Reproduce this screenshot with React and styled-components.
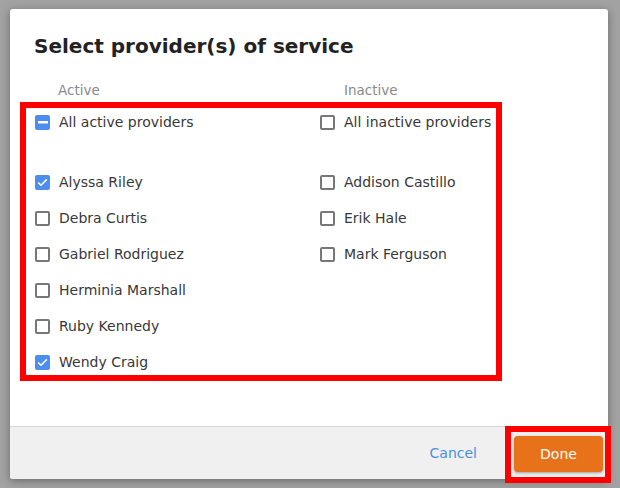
import React, { useState } from "react";
import styled, { createGlobalStyle } from "styled-components";

const Global = createGlobalStyle`
  html, body { margin: 0; padding: 0; background: #a2a2a2; }
  body { font-family: "DejaVu Sans", Verdana, sans-serif; width: 620px; height: 488px; overflow: hidden; }
  #root { padding: 9px 0 0 10px; }
`;

const Dialog = styled.div`
  width: 598px;
  height: 470px;
  background: #fff;
  border-radius: 3px;
  box-shadow: 0 2px 8px rgba(0, 0, 0, 0.35);
  display: flex;
  flex-direction: column;
  box-sizing: border-box;
`;

const Body = styled.div`
  flex: 1;
  padding: 25px 0 0 0;
`;

const Title = styled.h1`
  margin: 0 0 0 24px;
  font-size: 20px;
  line-height: 24px;
  font-weight: bold;
  color: #222;
`;

const Heads = styled.div`
  display: grid;
  grid-template-columns: 286px auto;
  margin: 23px 0 0 48px;
  font-size: 13.5px;
  line-height: 18px;
  color: #8a8a8a;
`;

const Highlight = styled.div`
  margin: 3px 0 0 10px;
  width: 482px;
  height: 279px;
  box-sizing: border-box;
  border: 6px solid #ff0000;
  padding: 4px 0 3px 9px;
  display: grid;
  grid-template-columns: 285px auto;
`;

const Column = styled.div`
  display: flex;
  flex-direction: column;
  gap: 16px;
`;

const Row = styled.label`
  display: flex;
  align-items: center;
  gap: 9px;
  height: 20px;
  font-size: 14px;
  color: #383838;
  margin-bottom: ${(p) => (p.$lead ? "24px" : "0")};
  cursor: pointer;
`;

const Box = styled.span`
  width: 15px;
  height: 15px;
  box-sizing: border-box;
  border-radius: 2px;
  flex: none;
  display: flex;
  align-items: center;
  justify-content: center;
  background: ${(p) => (p.$on ? "#4b8ef0" : "#fff")};
  border: ${(p) => (p.$on ? "none" : "2px solid #777")};
`;

const Footer = styled.div`
  height: 53px;
  box-sizing: border-box;
  border-top: 1px solid #d8d8d8;
  background: #f0f0f0;
  border-radius: 0 0 3px 3px;
  display: flex;
  align-items: center;
  justify-content: flex-end;
  gap: 28px;
`;

const Cancel = styled.button`
  border: none;
  background: none;
  padding: 0;
  font: inherit;
  font-size: 14px;
  color: #4a90e2;
  cursor: pointer;
`;

const Focus = styled.div`
  border: 6px solid #ff0000;
  padding: 4px 2px 5px 3px;
  margin-right: -3px;
  margin-top: 3px;
  background: #f0f0f0;
`;

const Done = styled.button`
  width: 89px;
  height: 36px;
  border: none;
  border-radius: 4px;
  background: #e8721a;
  color: #fff;
  font: inherit;
  font-size: 14px;
  box-shadow: 0 1px 3px rgba(0, 0, 0, 0.35);
  cursor: pointer;
  display: block;
`;

function Check({ state }) {
  const on = state !== "off";
  return (
    <Box $on={on}>
      {state === "on" && (
        <svg width="11" height="9" viewBox="0 0 11 9">
          <path d="M1.2 4.6 L4 7.3 L9.8 1.4" fill="none" stroke="#fff" strokeWidth="1.5" />
        </svg>
      )}
      {state === "mixed" && (
        <svg width="10" height="3" viewBox="0 0 10 3">
          <rect x="0" y="0" width="10" height="2.5" fill="#fff" />
        </svg>
      )}
    </Box>
  );
}

const activeNames = [
  "Alyssa Riley",
  "Debra Curtis",
  "Gabriel Rodriguez",
  "Herminia Marshall",
  "Ruby Kennedy",
  "Wendy Craig",
];
const inactiveNames = ["Addison Castillo", "Erik Hale", "Mark Ferguson"];

export default function App() {
  const [picked] = useState({ "Alyssa Riley": true, "Wendy Craig": true });
  return (
    <>
      <Global />
      <Dialog>
        <Body>
          <Title>Select provider(s) of service</Title>
          <Heads>
            <span>Active</span>
            <span>Inactive</span>
          </Heads>
          <Highlight>
            <Column>
              <Row $lead>
                <Check state="mixed" />
                All active providers
              </Row>
              {activeNames.map((n) => (
                <Row key={n}>
                  <Check state={picked[n] ? "on" : "off"} />
                  {n}
                </Row>
              ))}
            </Column>
            <Column>
              <Row $lead>
                <Check state="off" />
                All inactive providers
              </Row>
              {inactiveNames.map((n) => (
                <Row key={n}>
                  <Check state={picked[n] ? "on" : "off"} />
                  {n}
                </Row>
              ))}
            </Column>
          </Highlight>
        </Body>
        <Footer>
          <Cancel>Cancel</Cancel>
          <Focus>
            <Done>Done</Done>
          </Focus>
        </Footer>
      </Dialog>
    </>
  );
}
